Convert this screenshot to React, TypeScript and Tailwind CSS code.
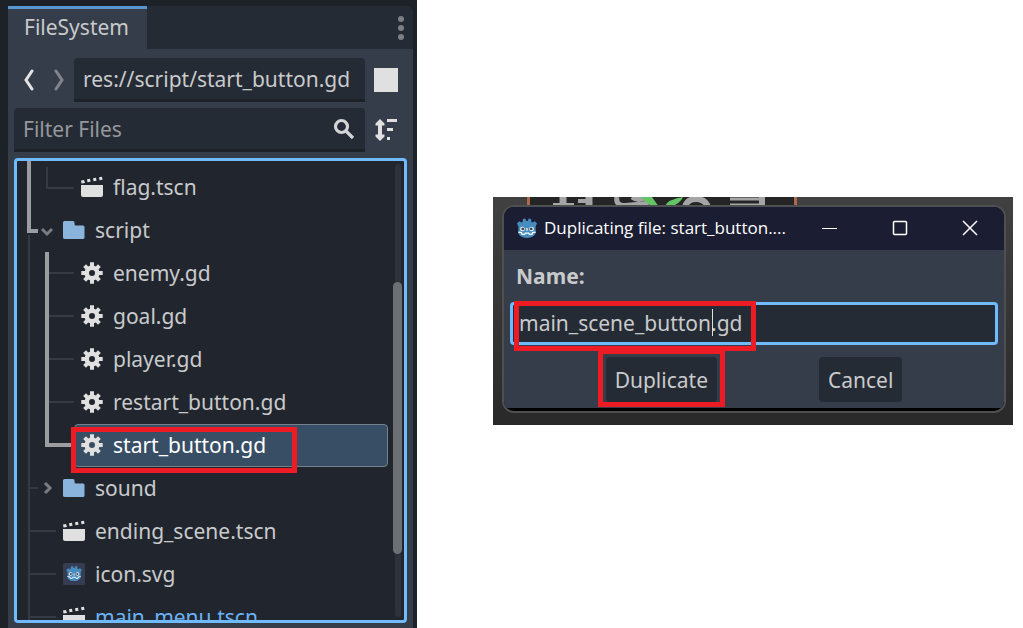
import React from "react";

type RowKind = "scene" | "folder" | "script" | "godot";

type Row = {
  name: string;
  kind: RowKind;
  level: 1 | 2;
  thin: string;
  thick?: string;
  chevron?: "down" | "right";
  selected?: boolean;
  open?: boolean;
};

const trunk = "M12 0V43";
const branch = "M32 21H57";
const parentBar = "M30 0V43";

const rows: Row[] = [
  { name: "flag.tscn", kind: "scene", level: 2, thin: "M30 1V22H57", thick: "M12 -6V43" },
  { name: "script", kind: "folder", level: 1, thin: "M12 26V43", thick: "M12 0V22H21", chevron: "down" },
  { name: "enemy.gd", kind: "script", level: 2, thin: trunk + branch, thick: parentBar },
  { name: "goal.gd", kind: "script", level: 2, thin: trunk + branch, thick: parentBar },
  { name: "player.gd", kind: "script", level: 2, thin: trunk + branch, thick: parentBar },
  { name: "restart_button.gd", kind: "script", level: 2, thin: trunk + branch, thick: parentBar },
  { name: "start_button.gd", kind: "script", level: 2, thin: trunk, thick: "M30 0V21H57", selected: true },
  { name: "sound", kind: "folder", level: 1, thin: trunk + "M12 21H21", chevron: "right" },
  { name: "ending_scene.tscn", kind: "scene", level: 1, thin: trunk + "M12 21H39" },
  { name: "icon.svg", kind: "godot", level: 1, thin: trunk + "M12 21H39" },
  { name: "main_menu.tscn", kind: "scene", level: 1, thin: trunk + "M12 21H39", open: true },
];

function GodotHead() {
  return (
    <g>
      <path
        fill="#478cbf"
        d="M1 6l2.500-2.500L6 5l1.200-.6L7.500 1.200 10 .5l1.300 2.700h1.400L14 .5l2.500.7.300 3.200L18 5l2.500-1.500L23 6l-1.500 3v7c0 3-4.500 6-9.500 6s-9.500-3-9.500-6V9z"
      />
      <path fill="none" stroke="#fff" strokeWidth="1.300" d="M2.500 15.500l3.500.5.500 2h3l.5-1.500h4l.5 1.500h3l.5-2 3.500-.5M12 11v3" />
      <circle cx="7" cy="12" r="2.500" fill="#fff" />
      <circle cx="17" cy="12" r="2.500" fill="#fff" />
      <circle cx="7.300" cy="12" r="1.500" fill="#414042" />
      <circle cx="16.700" cy="12" r="1.500" fill="#414042" />
    </g>
  );
}

function FileIcon({ kind }: { kind: RowKind }) {
  if (kind === "scene") {
    return (
      <svg aria-hidden="true" viewBox="0 0 22 22" className="size-[22px] shrink-0">
        <path fill="#e0e0e0" d="M0 9h22v10a2 2 0 0 1-2 2H2a2 2 0 0 1-2-2z" />
        <path fill="#e0e0e0" d="M0 4.500l3-.6 1 3-3.500.6zM6 3.300l3-.6.500 3-3 .6zM12 2.300l3-.6.500 3-3 .6zM18 1.300l3-.6.500 3-3 .6z" />
      </svg>
    );
  }
  if (kind === "folder") {
    return (
      <svg aria-hidden="true" viewBox="0 0 22 22" className="size-[22px] shrink-0">
        <path fill="#8ab4dc" d="M1.500 2H10q1.500 0 1.500 1.500V5q0 1.500 1.500 1.500h7q1.500 0 1.500 1.500v10.500q0 1.500-1.500 1.500h-18Q0 20 0 18.500v-15Q0 2 1.500 2z" />
      </svg>
    );
  }
  if (kind === "script") {
    return (
      <svg aria-hidden="true" viewBox="-11 -11 22 22" className="size-[22px] shrink-0">
        <circle r="5.300" fill="none" stroke="#e0e0e0" strokeWidth="4.600" />
        <g stroke="#e0e0e0" strokeWidth="4">
          <path d="M0-10.700V-6M0 10.700V6M-10.700 0H-6M10.700 0H6" />
          <path d="M-7.400-7.400l3.200 3.200M7.400-7.400L4.200-4.200M-7.400 7.400l3.200-3.200M7.400 7.400L4.200 4.200" />
        </g>
      </svg>
    );
  }
  return (
    <svg aria-hidden="true" viewBox="0 0 24 24" className="size-[22px] shrink-0">
      <rect width="24" height="24" rx="2" fill="#363d52" />
      <g transform="translate(3 3) scale(.76)">
        <GodotHead />
      </g>
    </svg>
  );
}

function TreeRow({ row }: { row: Row }) {
  return (
    <li className="relative flex h-[43px] shrink-0">
      <svg
        aria-hidden="true"
        className={row.level === 2 ? "h-[43px] w-[57px] shrink-0 overflow-visible" : "h-[43px] w-[39px] shrink-0 overflow-visible"}
        fill="none"
      >
        <path d={row.thin} stroke="#363a43" strokeWidth="2" />
        {row.thick && <path d={row.thick} stroke="#9b9da1" strokeWidth="4" />}
        {row.chevron === "down" && <path d="M25 20l5 5 5-5" stroke="#797c82" strokeWidth="3" />}
        {row.chevron === "right" && <path d="M28 16l5 5-5 5" stroke="#797c82" strokeWidth="3" />}
      </svg>
      <button
        type="button"
        className={
          row.selected
            ? "flex min-w-0 flex-1 items-center gap-[10px] rounded border border-[#74808c] bg-[#384e65] px-[6px] pb-px text-left text-white"
            : row.open
              ? "flex min-w-0 flex-1 items-center gap-[10px] px-[7px] pb-px text-left text-[#6bb1f5]"
              : "flex min-w-0 flex-1 items-center gap-[10px] px-[7px] pb-px text-left text-[#c9cacc]"
        }
      >
        <FileIcon kind={row.kind} />
        <span className="whitespace-nowrap">{row.name}</span>
      </button>
      {row.selected && (
        <span className="pointer-events-none absolute top-[3px] left-[54px] z-10 h-[46px] w-[226px] border-5 border-[#ed1c24]" />
      )}
    </li>
  );
}

function FileSystemDock() {
  return (
    <aside className="h-screen w-[417px] shrink-0 overflow-hidden bg-[#1d2229] pt-[6px] pr-1 pl-2 text-[21px] leading-7 text-[#c9cacc]">
      <div className="flex h-full flex-col">
        <header className="flex h-[43px] shrink-0 items-stretch justify-between rounded-tr-md bg-[#252b34]">
          <button type="button" className="border-t-3 border-[#5b97cf] bg-[#363d4a] pr-[18px] pb-1 pl-4">
            FileSystem
          </button>
          <button type="button" aria-label="Dock options" className="px-[9px]">
            <svg viewBox="0 0 6 24" className="h-6 w-[6px]" fill="#7c7f84">
              <circle cx="3" cy="3" r="3" />
              <circle cx="3" cy="12" r="3" />
              <circle cx="3" cy="21" r="3" />
            </svg>
          </button>
        </header>
        <div className="flex min-h-0 flex-1 flex-col gap-[6px] bg-[#363d4a] px-[6px] pt-[9px] pb-[5px]">
          <div className="flex h-11 shrink-0 items-center">
            <button type="button" aria-label="Previous folder" className="w-[30px] pl-[9px]">
              <svg viewBox="0 0 11 22" className="h-[22px] w-[11px]" fill="none" stroke="#e4e4e4" strokeWidth="3" strokeLinecap="round">
                <path d="M9 2L3 11l6 9" />
              </svg>
            </button>
            <button type="button" aria-label="Next folder" className="w-[30px] pl-[10px]">
              <svg viewBox="0 0 11 22" className="h-[22px] w-[11px]" fill="none" stroke="#81858c" strokeWidth="3" strokeLinecap="round">
                <path d="M2 2l6 9-6 9" />
              </svg>
            </button>
            <input
              aria-label="Current path"
              defaultValue="res://script/start_button.gd"
              className="h-11 min-w-0 flex-1 rounded-t border-b-3 border-[#1d2229] bg-[#252b34] px-[9px] outline-none"
            />
            <button type="button" aria-label="Toggle split mode" className="mr-[9px] ml-[9px] size-6 bg-[#e0e0e0]" />
          </div>
          <div className="flex h-11 shrink-0 items-center">
            <label className="flex h-11 min-w-0 flex-1 items-center rounded-t border-b-3 border-[#1d2229] bg-[#252b34] pr-[10px] pl-[9px]">
              <input
                aria-label="Filter Files"
                placeholder="Filter Files"
                className="min-w-0 flex-1 bg-transparent outline-none placeholder:text-[#95989c]"
              />
              <svg aria-hidden="true" viewBox="0 0 22 22" className="size-[22px]" fill="none" stroke="#d3d4d6" strokeWidth="3.200">
                <circle cx="8.500" cy="8.500" r="6" />
                <path d="M13 13l7 7" />
              </svg>
            </label>
            <button type="button" aria-label="Sort files" className="mr-[9px] ml-[9px]">
              <svg viewBox="0 0 24 24" className="size-6" fill="#e0e0e0">
                <path d="M6 1l4.500 4.500v2H8v9h2.500v2L6 23l-4.500-4.500v-2H4v-9H1.500v-2zM13 1h10v3H13zM13 10h6v3h-6zM13 19h3v3h-3z" />
              </svg>
            </button>
          </div>
          <div className="flex min-h-0 flex-1 overflow-hidden rounded border-3 border-[#70baff] bg-[#21262e]">
            <ul className="flex min-w-0 flex-1 flex-col overflow-hidden pt-[5px]">
              {rows.map((row) => (
                <TreeRow key={row.name} row={row} />
              ))}
            </ul>
            <div aria-hidden="true" className="mt-[3px] mr-[2px] mb-[3px] ml-[5px] flex w-[9px] flex-col items-center">
              <span className="h-[26%] w-[6px] rounded-t-full bg-[#2e323a]" />
              <span className="h-[60%] w-[9px] rounded-full bg-[#6c7075]" />
              <span className="w-[6px] flex-1 rounded-b-full bg-[#2e323a]" />
            </div>
          </div>
        </div>
      </div>
    </aside>
  );
}

function GameBackdrop() {
  return (
    <svg aria-hidden="true" className="absolute top-0 left-[34px] h-[10px] w-[270px]" fill="none">
      <rect width="270" height="10" fill="#252525" />
      <path d="M1.500 0V10M268.500 0V10" stroke="#ac694b" strokeWidth="3" />
      <path d="M26 8H47M51 4H60" stroke="#a5a5a5" strokeWidth="4" />
      <path d="M36 0V8M62 0V10" stroke="#a5a5a5" strokeWidth="7" />
      <path d="M90 0C88 9 96 9 104 8S120 8 122 4M105 0Q112 5 118 0" stroke="#a5a5a5" strokeWidth="5" />
      <path d="M114 0h11l7 10h-5Q118 6 114 0zM137 10q4-8 19-10-3 7-13 10z" fill="#65c466" />
      <path d="M158 10Q160 2 169 2T181 10" stroke="#a5a5a5" strokeWidth="6" />
      <path d="M203 2H232M203 8H238" stroke="#a5a5a5" strokeWidth="3" />
      <path d="M235 0V10" stroke="#a5a5a5" strokeWidth="6" />
    </svg>
  );
}

function DuplicateDialog() {
  return (
    <section className="relative w-full bg-linear-to-b from-[#414141] to-[#292929] pt-[8px] pr-[7px] pb-3 pl-[9px]">
      <GameBackdrop />
      <div role="dialog" aria-labelledby="dialog-title" className="relative overflow-hidden rounded-xl border-2 border-[#4e4f51] bg-black pb-[3px]">
        <header className="flex h-[43px] items-center bg-[#1b1e32] pl-3 text-white">
          <svg aria-hidden="true" viewBox="0 0 24 23" className="h-[21px] w-[22px] shrink-0">
            <GodotHead />
          </svg>
          <h1 id="dialog-title" className="ml-[6px] min-w-0 flex-1 truncate pb-[2px] font-['Open_Sans','Noto_Sans',sans-serif] text-[17px] leading-6">
            Duplicating file: start_button....
          </h1>
          <div className="flex items-center gap-[54px] pr-[26px] pb-px">
            <button type="button" aria-label="Minimize">
              <svg viewBox="0 0 16 16" className="size-4" stroke="#fff" fill="none">
                <path d="M0 8.500H15" />
              </svg>
            </button>
            <button type="button" aria-label="Maximize">
              <svg viewBox="0 0 16 16" className="size-4" stroke="#fff" strokeWidth="1.500" fill="none">
                <rect x="1.500" y="1.500" width="13" height="13" rx="1" />
              </svg>
            </button>
            <button type="button" aria-label="Close">
              <svg viewBox="0 0 16 16" className="size-4" stroke="#fff" strokeWidth="1.500" fill="none">
                <path d="M1 1l14 14M15 1L1 15" />
              </svg>
            </button>
          </div>
        </header>
        <form className="bg-[#363d4a] px-[6px] pt-3 pb-[6px] text-[21px] leading-7 text-[#c9cacc]" onSubmit={(event) => event.preventDefault()}>
          <label htmlFor="duplicate-name" className="block pl-[6px] font-bold">
            Name:
          </label>
          <div className="relative mt-3">
            <input
              id="duplicate-name"
              defaultValue="main_scene_button.gd"
              className="block h-[43px] w-full rounded border-3 border-[#70baff] bg-[#252b34] px-[6px] pb-[2px] outline-none"
            />
            <span className="absolute top-[7px] left-[202px] h-[27px] w-px bg-[#e0e0e0]" />
            <span className="pointer-events-none absolute -top-px left-[4px] h-[50px] w-[242px] border-5 border-[#ed1c24]" />
          </div>
          <div className="mt-3 flex justify-center gap-[102px]">
            <div className="relative">
              <button type="button" className="h-[45px] rounded bg-[#252b34] px-[9px]">
                Duplicate
              </button>
              <span className="pointer-events-none absolute -inset-x-2 -top-2 -bottom-[5px] border-5 border-[#ed1c24]" />
            </div>
            <button type="button" className="h-[45px] rounded bg-[#252b34] px-[9px]">
              Cancel
            </button>
          </div>
        </form>
      </div>
    </section>
  );
}

export default function App() {
  return (
    <div className="flex min-h-screen bg-white font-['Noto_Sans',sans-serif]">
      <FileSystemDock />
      <main className="min-w-0 flex-1 pt-[197px] pr-[10px] pl-[76px]">
        <DuplicateDialog />
      </main>
    </div>
  );
}
